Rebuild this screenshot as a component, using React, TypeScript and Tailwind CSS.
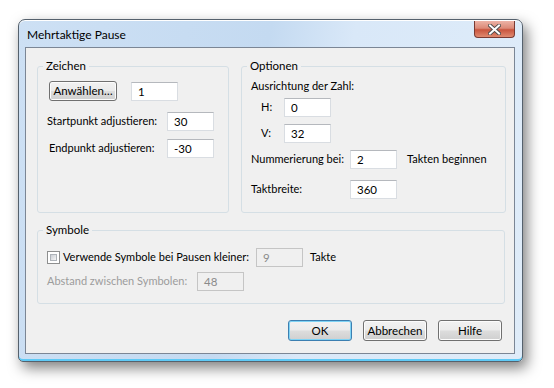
const font = "font-['Lato','Noto_Sans',sans-serif]";

function Field({ value, w = "w-[47px]", disabled = false, className = "" }: { value: string; w?: string; disabled?: boolean; className?: string }) {
  return (
    <div
      className={`${w} h-[19px] shrink-0 border flex items-center pl-[6px] text-[11.5px] ${
        disabled
          ? "bg-[#f0f0f0] border-[#c5c5c5] text-[#8a8a8a]"
          : "bg-white border-[#d9dde2] border-t-[#b5b8bd] text-black"
      } ${className}`}
    >
      {value}
    </div>
  );
}

function Button({ label, primary = false, w = "w-[64px]", h = "h-[21px]" }: { label: string; primary?: boolean; w?: string; h?: string }) {
  return (
    <button
      className={`${w} ${h} shrink-0 rounded-[3px] border text-black text-[11.5px] flex items-center justify-center bg-[linear-gradient(#f2f2f2_0%,#ebebeb_48%,#dddddd_52%,#cfcfcf_100%)] ${
        primary
          ? "border-[#3c7fb1] shadow-[inset_0_0_0_1px_#7fd3f5]"
          : "border-[#707070] shadow-[inset_0_0_0_1px_#fcfcfc]"
      }`}
    >
      {label}
    </button>
  );
}

function Group({ title, className = "", children }: { title: string; className?: string; children: React.ReactNode }) {
  return (
    <fieldset className={`border border-[#d5dfe5] rounded-[3px] ${className}`}>
      <legend className="ml-[5px] px-[3px] leading-[14px] text-[11.5px]">{title}</legend>
      {children}
    </fieldset>
  );
}

export default function App() {
  return (
    <div className={`w-[554px] h-[388px] bg-white pl-[18px] pt-[19px] whitespace-nowrap text-[11px] ${font}`}>
      {/* window frame */}
      <div className="w-[505px] h-[343px] rounded-t-[7px] rounded-b-[5px] border border-[#55616d] bg-[linear-gradient(100deg,#cde0f4_0%,#c4daf1_45%,#d9e8f8_60%,#dfecf9_100%)] shadow-[inset_0_-2px_0_#5fcaf6,inset_0_1px_0_#ffffff,4px_6px_14px_rgba(0,0,0,0.5)]">
        {/* title bar */}
        <div className="h-[27px] flex justify-between items-start">
          <span className="pl-[8px] pt-[7px] text-[12px] leading-[15px] text-black">Mehrtaktige Pause</span>
          <div className="mt-[1px] mr-[7px] w-[41px] h-[17px] rounded-b-[4px] border border-[#7a3a32] border-t-0 bg-[linear-gradient(#edb3a6_0%,#dc8a78_45%,#c9553e_55%,#e08a70_100%)] flex items-center justify-center">
            <svg width="13" height="11" viewBox="0 0 13 11">
              <path d="M2 1.5 L11 9.5 M11 1.5 L2 9.5" stroke="#4a4a4a" strokeWidth="3.8" strokeLinecap="square" />
              <path d="M2 1.5 L11 9.5 M11 1.5 L2 9.5" stroke="#ffffff" strokeWidth="2" strokeLinecap="square" />
            </svg>
          </div>
        </div>

        {/* client area */}
        <div className="ml-[6px] w-[490px] h-[307px] border border-[#7b8695] bg-[#f0f0f0] text-black pt-[11px] pl-[11px]">
          <div className="flex gap-[12px]">
            <Group title="Zeichen" className="w-[192px] h-[154px]">
              <div className="flex items-start mt-[8px] ml-[11px]">
                <Button label="Anwählen…" w="w-[68px]" h="h-[20px]" />
                <Field value="1" className="ml-[14px] mt-[1px]" />
              </div>
              <div className="flex items-center mt-[11px] ml-[9px]">
                <span className="w-[120px] shrink-0">Startpunkt adjustieren:</span>
                <Field value="30" />
              </div>
              <div className="flex items-center mt-[8px] ml-[11px]">
                <span className="w-[118px] shrink-0">Endpunkt adjustieren:</span>
                <Field value="-30" />
              </div>
            </Group>

            <Group title="Optionen" className="w-[265px] h-[154px]">
              <div className="ml-[9px] mt-[5px] leading-[15px]">Ausrichtung der Zahl:</div>
              <div className="flex items-center mt-[5px] ml-[19px]">
                <span className="w-[23px] shrink-0">H:</span>
                <Field value="0" />
              </div>
              <div className="flex items-center mt-[7px] ml-[19px]">
                <span className="w-[23px] shrink-0">V:</span>
                <Field value="32" />
              </div>
              <div className="flex items-center mt-[7px] ml-[9px]">
                <span className="w-[99px] shrink-0">Nummerierung bei:</span>
                <Field value="2" />
                <span className="ml-[10px]">Takten beginnen</span>
              </div>
              <div className="flex items-center mt-[11px] ml-[9px]">
                <span className="w-[99px] shrink-0">Taktbreite:</span>
                <Field value="360" />
              </div>
            </Group>
          </div>

          <Group title="Symbole" className="w-[468px] h-[81px] mt-[10px]">
            <div className="flex items-center mt-[11px] ml-[9px]">
              <div className="w-[13px] h-[13px] shrink-0 border border-[#8e8f8f] bg-white p-[2px]">
                <div className="w-full h-full bg-[linear-gradient(135deg,#cbcfd5,#f6f6f6)] border border-[#aeb3b9]" />
              </div>
              <span className="ml-[3px] w-[193px] shrink-0">Verwende Symbole bei Pausen kleiner:</span>
              <Field value="9" disabled />
              <span className="ml-[7px]">Takte</span>
            </div>
            <div className="flex items-center mt-[5px] ml-[9px] text-[#9c9c9c]">
              <span className="w-[150px] shrink-0">Abstand zwischen Symbolen:</span>
              <Field value="48" disabled />
            </div>
          </Group>

          <div className="flex justify-end gap-[11px] mt-[16px] pr-[12px]">
            <Button label="OK" primary />
            <Button label="Abbrechen" />
            <Button label="Hilfe" />
          </div>
        </div>
      </div>
    </div>
  );
}
